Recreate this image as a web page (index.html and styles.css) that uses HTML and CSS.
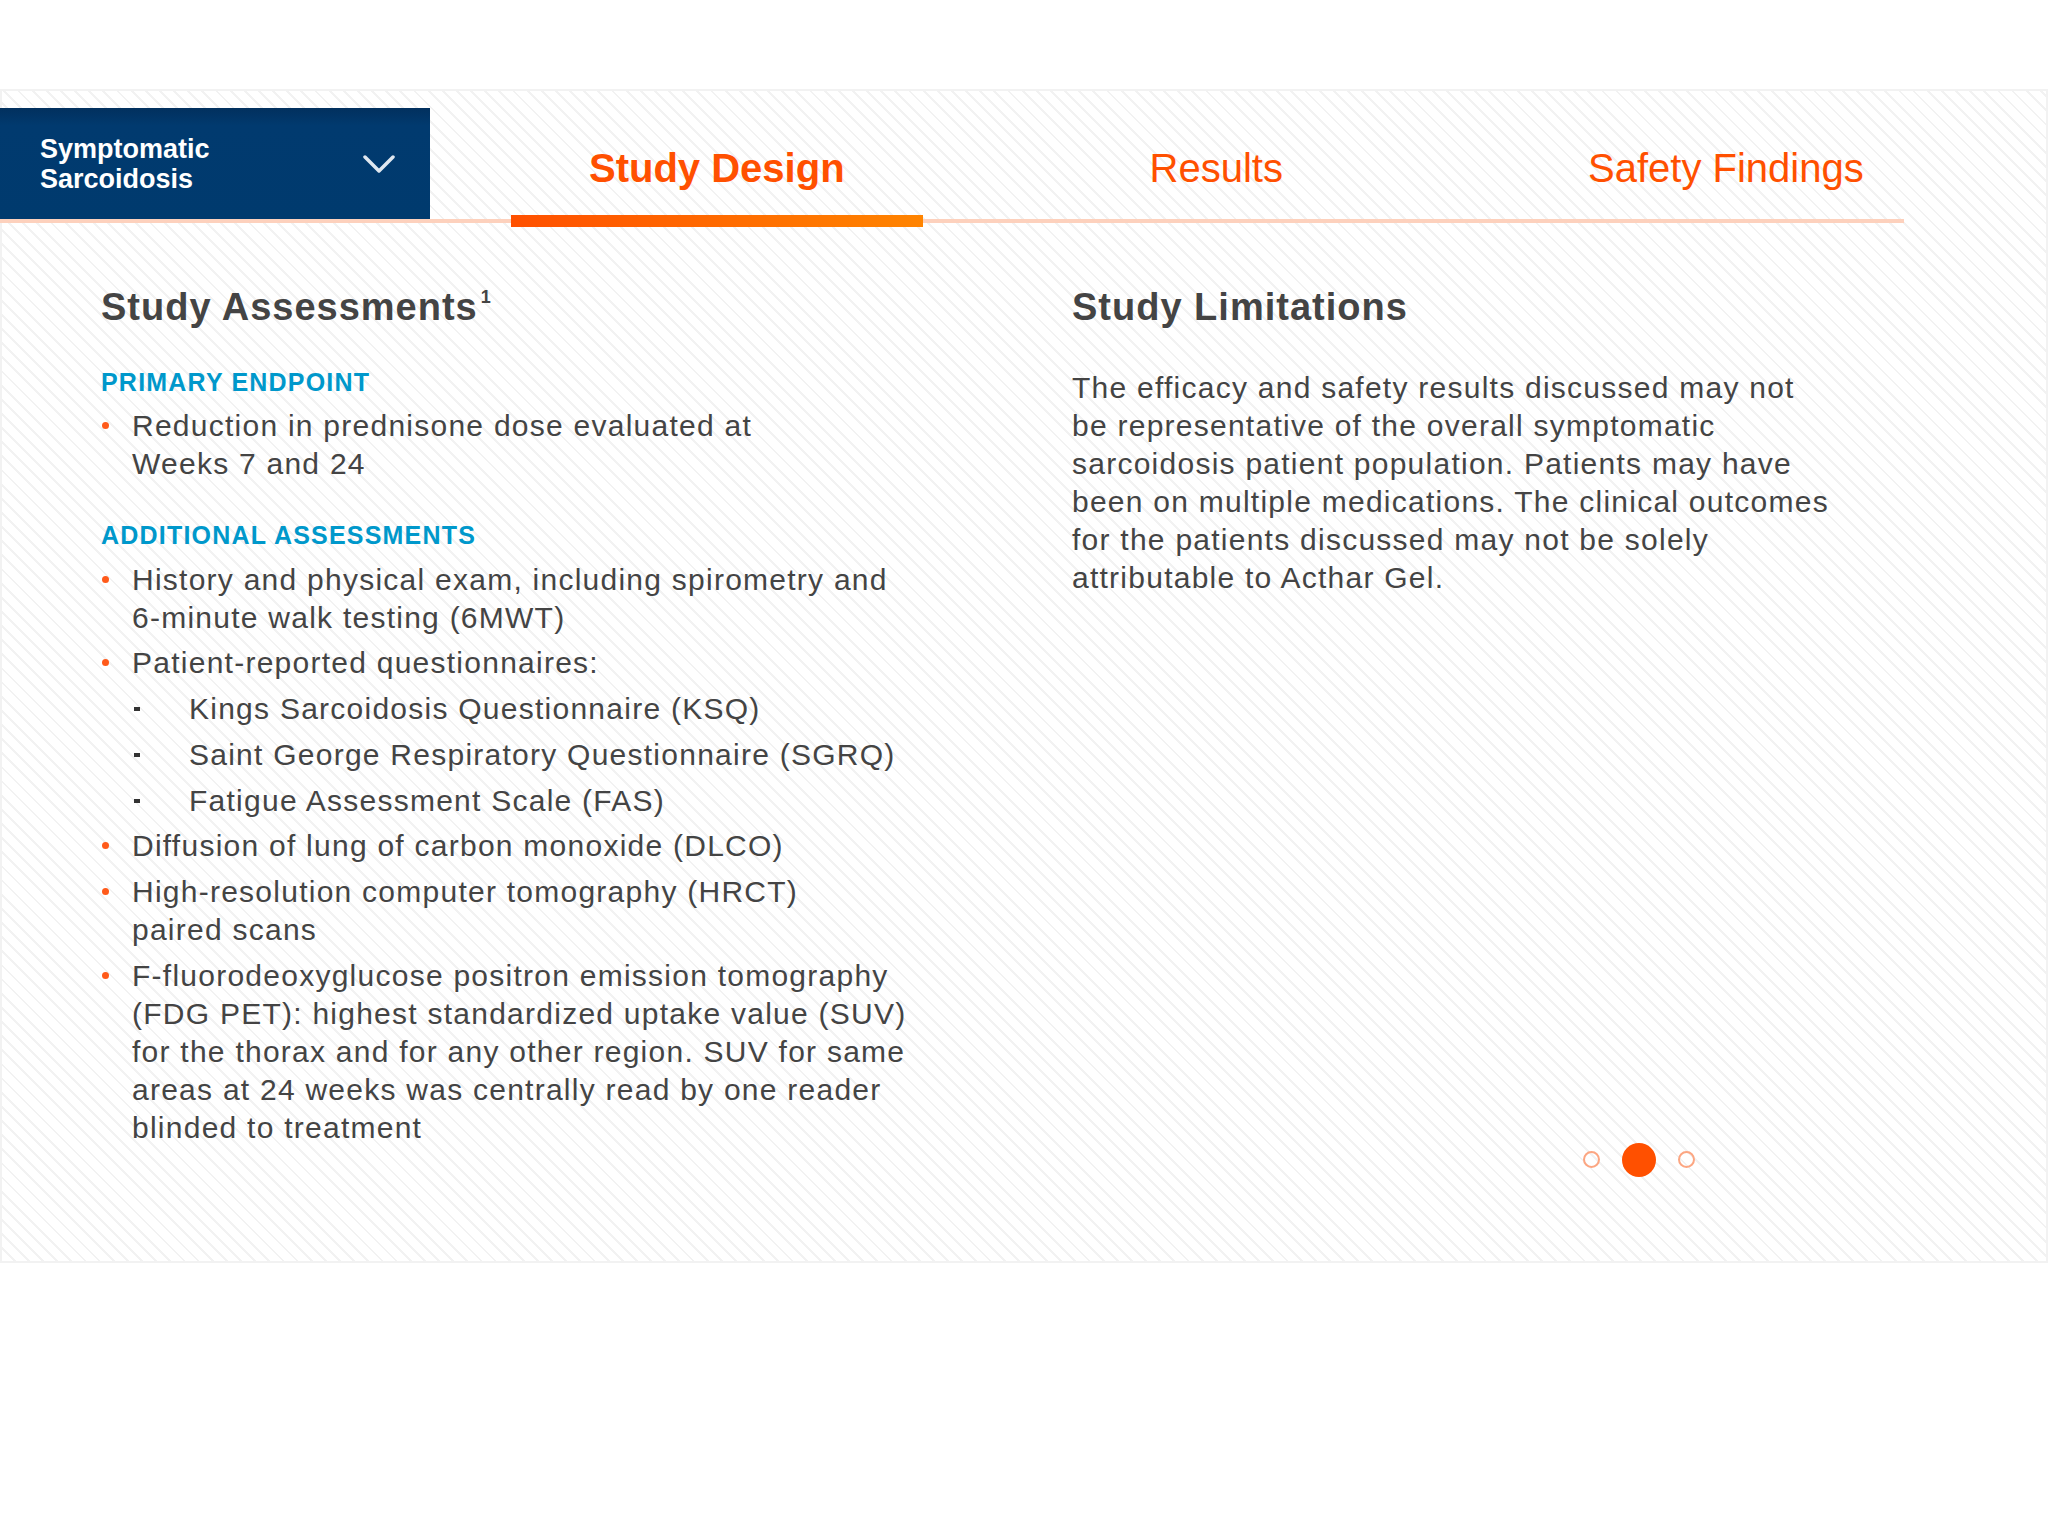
FILE: index.html
```html
<!DOCTYPE html>
<html lang="en">
<head>
<meta charset="utf-8">
<title>Study Design</title>
<link rel="stylesheet" href="styles.css">
</head>
<body>
<main class="panel">
  <header class="topbar">
    <button class="indication" type="button">
      <span class="indication-label">Symptomatic<br>Sarcoidosis</span>
      <svg class="chevron" width="32" height="18" viewBox="0 0 32 18" aria-hidden="true"><polyline points="2,2 16,16 30,2" fill="none" stroke="#dfe7f0" stroke-width="3.5" stroke-linecap="round" stroke-linejoin="round"/></svg>
    </button>
    <nav class="tabs">
      <a class="tab active" href="#">Study Design</a>
      <a class="tab" href="#">Results</a>
      <a class="tab" href="#">Safety Findings</a>
    </nav>
  </header>
  <section class="content">
    <div class="col-left">
      <h2 class="title">Study Assessments<sup class="ref">1</sup></h2>
      <h3 class="label">PRIMARY ENDPOINT</h3>
      <ul class="bullets">
        <li>Reduction in prednisone dose evaluated at<br>Weeks 7 and 24</li>
      </ul>
      <h3 class="label">ADDITIONAL ASSESSMENTS</h3>
      <ul class="bullets">
        <li>History and physical exam, including spirometry and 6-minute walk testing (6MWT)</li>
        <li>Patient-reported questionnaires:
          <ul class="sub">
            <li>Kings Sarcoidosis Questionnaire (KSQ)</li>
            <li>Saint George Respiratory Questionnaire (SGRQ)</li>
            <li>Fatigue Assessment Scale (FAS)</li>
          </ul>
        </li>
        <li>Diffusion of lung of carbon monoxide (DLCO)</li>
        <li>High-resolution computer tomography (HRCT)<br>paired scans</li>
        <li>F-fluorodeoxyglucose positron emission tomography (FDG PET): highest standardized uptake value (SUV) for the thorax and for any other region. SUV for same areas at 24 weeks was centrally read by one reader blinded to treatment</li>
      </ul>
    </div>
    <div class="col-right">
      <h2 class="title">Study Limitations</h2>
      <p class="text">The efficacy and safety results discussed may not be representative of the overall symptomatic sarcoidosis patient population. Patients may have been on multiple medications. The clinical outcomes for the patients discussed may not be solely attributable to Acthar Gel.</p>
      <div class="dots" aria-label="Slides">
        <span class="dot"></span>
        <span class="dot on"></span>
        <span class="dot"></span>
      </div>
    </div>
  </section>
</main>
</body>
</html>
```
FILE: styles.css
```css
* { box-sizing: border-box; }
html, body { margin: 0; padding: 0; background: #fff; }
body {
  font-family: "Liberation Sans", Arial, Helvetica, sans-serif;
  color: #444;
}
.panel {
  margin-top: 89px;
  border: 2px solid #f2f2f2;
  background-color: #fff;
  background-image: repeating-linear-gradient(45deg, #fff 0, #fff 8px, #f2f2f2 8px, #f2f2f2 10px);
  padding-bottom: 84px;
}
.topbar {
  display: flex;
  width: 1904px;
  height: 115px;
  margin: 17px 0 0 -2px;
  border-bottom: 4px solid #fdd1bd;
}
.indication {
  width: 430px;
  height: 111px;
  flex: none;
  display: flex;
  align-items: center;
  justify-content: space-between;
  padding: 0 35px 0 40px;
  margin: 0;
  border: 0;
  background: linear-gradient(180deg, #02305e 0%, #013a6f 16%, #003a6e 100%);
  color: #fff;
  font: bold 27px/30px "Liberation Sans", Arial, sans-serif;
  text-align: left;
  cursor: pointer;
}
.chevron { display: block; }
.tabs {
  display: flex;
  gap: 149px;
  margin-left: 81px;
}
.tab {
  position: relative;
  padding: 40px 78px 0;
  font-size: 40px;
  line-height: 40px;
  color: #ff5000;
  text-decoration: none;
  white-space: nowrap;
}
.tab.active { font-weight: bold; }
.tab.active::after {
  content: "";
  position: absolute;
  left: 0;
  right: 0;
  bottom: -8px;
  height: 12px;
  background: linear-gradient(90deg, #ff5000 0%, #ff8400 100%);
}
.content {
  display: grid;
  grid-template-columns: 821px 765px;
  column-gap: 150px;
  padding: 61px 0 0 99px;
}
.title {
  margin: 0;
  font-size: 38px;
  line-height: 46px;
  font-weight: bold;
  letter-spacing: 1px;
  color: #444;
}
.ref {
  font-size: 18px;
  line-height: 0;
  vertical-align: 17px;
  margin-left: 3px;
  letter-spacing: 0;
}
.label {
  margin: 36.5px 0 10.3px;
  font-size: 25px;
  line-height: 30px;
  font-weight: bold;
  letter-spacing: 1.2px;
  color: #0098cb;
}
.bullets + .label { margin-top: 37.7px; }
.bullets {
  list-style: none;
  margin: 0;
  padding: 0;
  font-size: 30px;
  line-height: 38px;
  letter-spacing: 1.25px;
}
.bullets > li {
  position: relative;
  padding-left: 31px;
}
.bullets > li + li { margin-top: 7.7px; }
.bullets > li::before {
  content: "";
  position: absolute;
  left: 1px;
  top: 15px;
  width: 7px;
  height: 7px;
  border-radius: 50%;
  background: #ff5a1a;
}
.sub {
  list-style: none;
  margin: 7.7px 0 0;
  padding: 0;
}
.sub > li {
  position: relative;
  padding-left: 57px;
}
.sub > li + li { margin-top: 7.7px; }
.sub > li::before {
  content: "";
  position: absolute;
  left: 2px;
  top: 17px;
  width: 6px;
  height: 4px;
  background: #333;
}
.col-left { padding-bottom: 30px; }
.col-right {
  display: flex;
  flex-direction: column;
}
.text {
  margin: 38.8px 0 0;
  font-size: 30px;
  line-height: 38px;
  letter-spacing: 1.25px;
}
.dots {
  margin-top: auto;
  margin-left: 511px;
  display: flex;
  align-items: center;
  gap: 22px;
  height: 34px;
}
.dot {
  width: 17px;
  height: 17px;
  border: 2px solid #fca682;
  border-radius: 50%;
}
.dot.on {
  width: 34px;
  height: 34px;
  border: 0;
  background: #ff5000;
}
```
